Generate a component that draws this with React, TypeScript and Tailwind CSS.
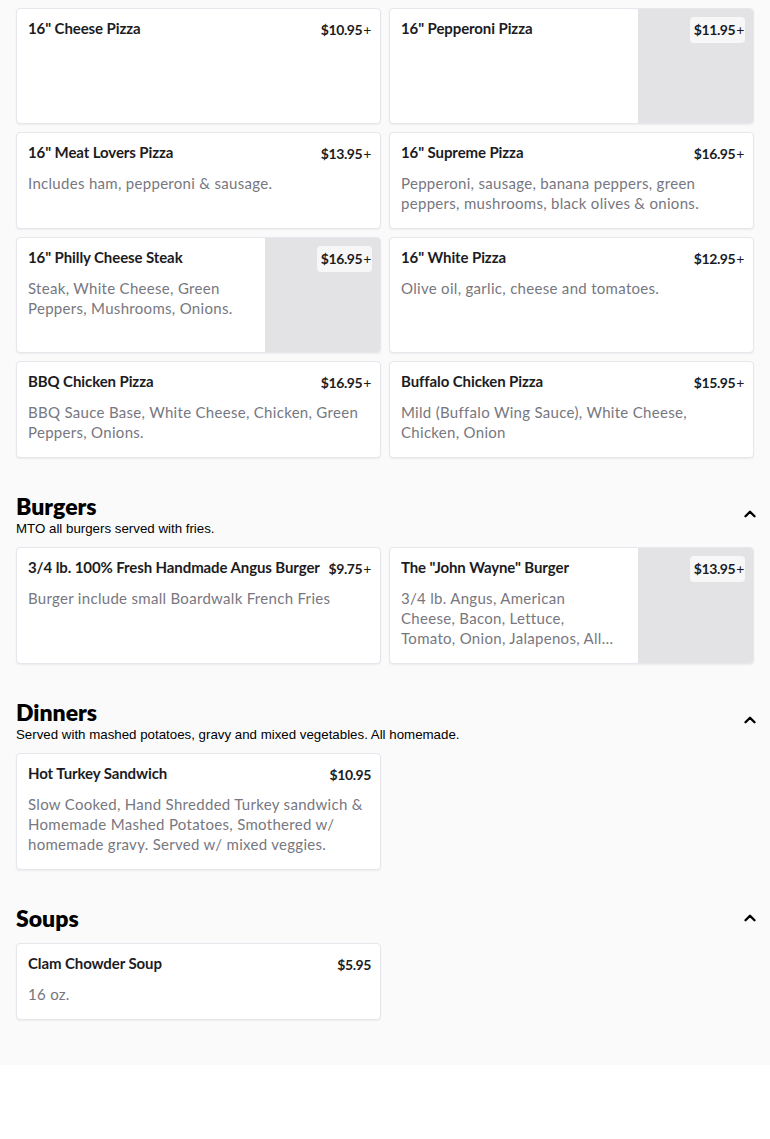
import { ChevronUp } from "lucide-react";

type Item = {
  name: string;
  price: string;
  plus?: boolean;
  desc?: string;
  image?: boolean;
};

type Section = {
  title?: string;
  subtitle?: string;
  items: Item[];
};

const sections: Section[] = [
  {
    items: [
      { name: '16" Cheese Pizza', price: "$10.95", plus: true },
      { name: '16" Pepperoni Pizza', price: "$11.95", plus: true, image: true },
      {
        name: '16" Meat Lovers Pizza',
        price: "$13.95",
        plus: true,
        desc: "Includes ham, pepperoni & sausage.",
      },
      {
        name: '16" Supreme Pizza',
        price: "$16.95",
        plus: true,
        desc: "Pepperoni, sausage, banana peppers, green peppers, mushrooms, black olives & onions.",
      },
      {
        name: '16" Philly Cheese Steak',
        price: "$16.95",
        plus: true,
        desc: "Steak, White Cheese, Green Peppers, Mushrooms, Onions.",
        image: true,
      },
      {
        name: '16" White Pizza',
        price: "$12.95",
        plus: true,
        desc: "Olive oil, garlic, cheese and tomatoes.",
      },
      {
        name: "BBQ Chicken Pizza",
        price: "$16.95",
        plus: true,
        desc: "BBQ Sauce Base, White Cheese, Chicken, Green Peppers, Onions.",
      },
      {
        name: "Buffalo Chicken Pizza",
        price: "$15.95",
        plus: true,
        desc: "Mild (Buffalo Wing Sauce), White Cheese, Chicken, Onion",
      },
    ],
  },
  {
    title: "Burgers",
    subtitle: "MTO all burgers served with fries.",
    items: [
      {
        name: "3/4 lb. 100% Fresh Handmade Angus Burger",
        price: "$9.75",
        plus: true,
        desc: "Burger include small Boardwalk French Fries",
      },
      {
        name: 'The "John Wayne" Burger',
        price: "$13.95",
        plus: true,
        desc: "3/4 lb. Angus, American Cheese, Bacon, Lettuce, Tomato, Onion, Jalapenos, All the fixings on a toasted bun.",
        image: true,
      },
    ],
  },
  {
    title: "Dinners",
    subtitle: "Served with mashed potatoes, gravy and mixed vegetables. All homemade.",
    items: [
      {
        name: "Hot Turkey Sandwich",
        price: "$10.95",
        desc: "Slow Cooked, Hand Shredded Turkey sandwich & Homemade Mashed Potatoes, Smothered w/ homemade gravy. Served w/ mixed veggies.",
      },
    ],
  },
  {
    title: "Soups",
    items: [{ name: "Clam Chowder Soup", price: "$5.95", desc: "16 oz." }],
  },
];

function MenuCard({ item }: { item: Item }) {
  return (
    <div className="relative flex overflow-hidden rounded-[4px] border border-[#e6e6ec] bg-white shadow-[0_1px_2px_rgba(0,0,0,0.06)]">
      <div
        className={`min-w-0 flex-1 pt-[8px] pb-[15px] pl-[11px] ${
          item.image ? "min-h-[114px] pr-5" : "pr-3"
        }`}
      >
        <div className="overflow-hidden whitespace-nowrap text-[15px] leading-[22px] font-bold tracking-[-0.1px] text-[#1c1c1f]">
          {item.name}
        </div>
        {item.desc && (
          <p className="mt-[10px] line-clamp-3 text-[15px] leading-5 tracking-[0.3px] text-[#77777f]">
            {item.desc}
          </p>
        )}
      </div>
      {item.image && <div className="w-[115px] shrink-0 bg-[#e3e3e5]" />}
      <div
        className={`absolute top-2 right-2 rounded-[4px] py-[3px] pr-[1px] pl-1 text-[14px] leading-5 font-bold tracking-[-0.4px] text-[#1c1c1f] ${
          item.image ? "bg-[#f7f7f8]" : "bg-white"
        }`}
      >
        {item.price}
        {item.plus && <span className="ml-[1px] font-normal">+</span>}
      </div>
    </div>
  );
}

export default function App() {
  return (
    <div className="bg-white" style={{ fontFamily: "Lato, 'Noto Sans', sans-serif" }}>
      <div className="bg-[#fafafb] px-4 pt-2 pb-[45px]">
        {sections.map((section, i) => (
          <div key={i}>
            {section.title && (
              <div className="mt-[33px] mb-[10px] flex items-center justify-between">
                <div>
                  <h2 className="text-[23px] leading-[30px] font-extrabold text-black">
                    {section.title}
                  </h2>
                  {section.subtitle && (
                    <p
                      className="text-[13.3px] leading-4 text-black"
                      style={{ fontFamily: "'Liberation Sans', Arial, sans-serif" }}
                    >
                      {section.subtitle}
                    </p>
                  )}
                </div>
                <ChevronUp
                  className="mr-[-5px] h-[18px] w-[18px] text-black"
                  strokeWidth={3.2}
                />
              </div>
            )}
            <div className="grid grid-cols-2 gap-2">
              {section.items.map((item) => (
                <MenuCard key={item.name} item={item} />
              ))}
            </div>
          </div>
        ))}
      </div>
    </div>
  );
}
